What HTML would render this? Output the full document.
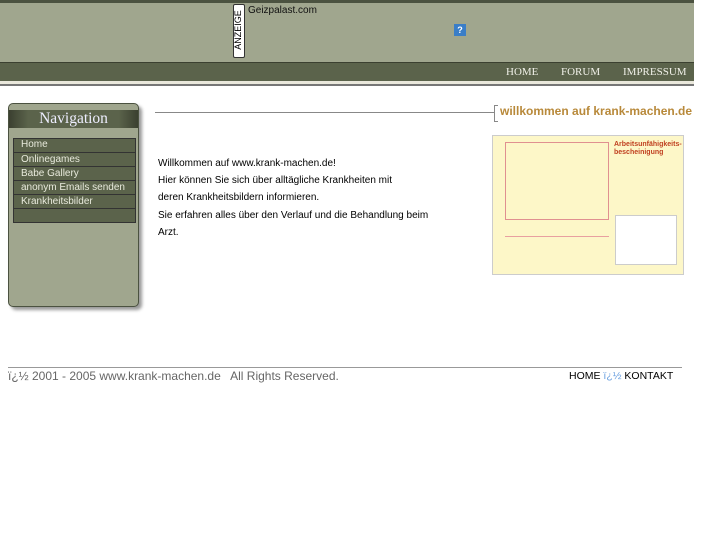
<!DOCTYPE html>
<html><head><style>
body{margin:0;background:#fff;font-family:"Liberation Sans",sans-serif;width:727px;height:545px;position:relative;overflow:hidden}
.a{position:absolute}
</style></head><body>
<div class="a" style="left:0;top:0;width:694px;height:3px;background:#4b5240"></div>
<div class="a" style="left:0;top:3px;width:694px;height:59px;background:#a0a68e"></div>
<div class="a" style="left:233px;top:4px;width:10px;height:52px;background:#fff;border:1px solid #333;border-radius:2px"></div>
<div class="a" style="left:217px;top:25px;width:42px;height:10px;transform:rotate(-90deg);font-size:9px;text-align:center;line-height:10px;color:#000">ANZEIGE</div>
<div class="a" style="left:248px;top:5px;font-size:10px;color:#111">Geizpalast.com</div>
<div class="a" style="left:454px;top:24px;width:12px;height:12px;background:#3a7ec8;color:#fff;font-size:9px;text-align:center;line-height:12px;font-weight:bold">?</div>
<div class="a" style="left:0;top:62px;width:694px;height:18px;background:#5b634b;border-top:1px solid #3b4030"></div>
<div class="a" style="left:506px;top:66px;font-family:'Liberation Serif',serif;font-size:11px;color:#f0f0e8">HOME</div>
<div class="a" style="left:561px;top:66px;font-family:'Liberation Serif',serif;font-size:11px;color:#f0f0e8">FORUM</div>
<div class="a" style="left:623px;top:66px;font-family:'Liberation Serif',serif;font-size:11px;color:#f0f0e8">IMPRESSUM</div>
<div class="a" style="left:0;top:81px;width:694px;height:3px;background:#eae8dc"></div>
<div class="a" style="left:0;top:84px;width:694px;height:2px;background:#777"></div>

<div class="a" style="left:8px;top:103px;width:129px;height:202px;background:#a0a68e;border:1px solid #4b5240;border-radius:5px;box-shadow:3px 3px 3px #999"></div>
<div class="a" style="left:9px;top:110px;width:129px;height:18px;background:linear-gradient(90deg,#3b4030,#5b634b 15%,#5b634b 85%,#3b4030);color:#eef;font-family:'Liberation Serif',serif;font-size:15.5px;text-align:center;line-height:18px">Navigation</div>
<div class="a" style="left:13px;top:138px;width:121px;border:1px solid #333;background:#5b634b;font-size:10px;color:#e8eadc">
<div style="height:13px;line-height:12px;border-bottom:1px solid #333;padding-left:7px">Home</div>
<div style="height:13px;line-height:13px;border-bottom:1px solid #333;padding-left:7px">Onlinegames</div>
<div style="height:13px;line-height:13px;border-bottom:1px solid #333;padding-left:7px">Babe Gallery</div>
<div style="height:13px;line-height:13px;border-bottom:1px solid #333;padding-left:7px">anonym Emails senden</div>
<div style="height:13px;line-height:13px;border-bottom:1px solid #333;padding-left:7px">Krankheitsbilder</div>
<div style="height:13px"></div>
</div>

<div class="a" style="left:155px;top:112px;width:339px;height:1px;background:#888"></div>
<div class="a" style="left:494px;top:105px;width:3px;height:15px;border:1px solid #888;border-right:none"></div>
<div class="a" style="left:500px;top:104px;font-size:12px;font-weight:bold;color:#b8893a">willkommen auf krank-machen.de</div>

<div class="a" style="left:158px;top:155px;font-size:10px;line-height:17.2px;color:#000">Willkommen auf www.krank-machen.de!<br>Hier können Sie sich über alltägliche Krankheiten mit<br>deren Krankheitsbildern informieren.<br>Sie erfahren alles über den Verlauf und die Behandlung beim<br>Arzt.</div>

<div class="a" style="left:492px;top:135px;width:190px;height:138px;background:#fdf7c8;border:1px solid #ccc">
<div class="a" style="left:12px;top:6px;width:102px;height:76px;border:1px solid #e09090"></div>
<div class="a" style="left:121px;top:5px;font-size:7px;color:#c04020;font-weight:bold;line-height:8px">Arbeitsunfähigkeits-<br>bescheinigung</div>
<div class="a" style="left:12px;top:100px;width:104px;height:30px;border-top:1px solid #e8a0a0"></div>
<div class="a" style="left:122px;top:79px;width:60px;height:48px;background:#fff;border:1px solid #ccc"></div>
</div>

<div class="a" style="left:8px;top:367px;width:674px;height:1px;background:#999"></div>
<div class="a" style="left:8px;top:369px;font-size:12px;color:#666">ï¿½ 2001 - 2005 www.krank-machen.de &nbsp; All Rights Reserved.</div>
<div class="a" style="left:569px;top:370px;font-size:10.5px;color:#000">HOME <span style="color:#6aa0e0">ï¿½</span> KONTAKT</div>
</body></html>
